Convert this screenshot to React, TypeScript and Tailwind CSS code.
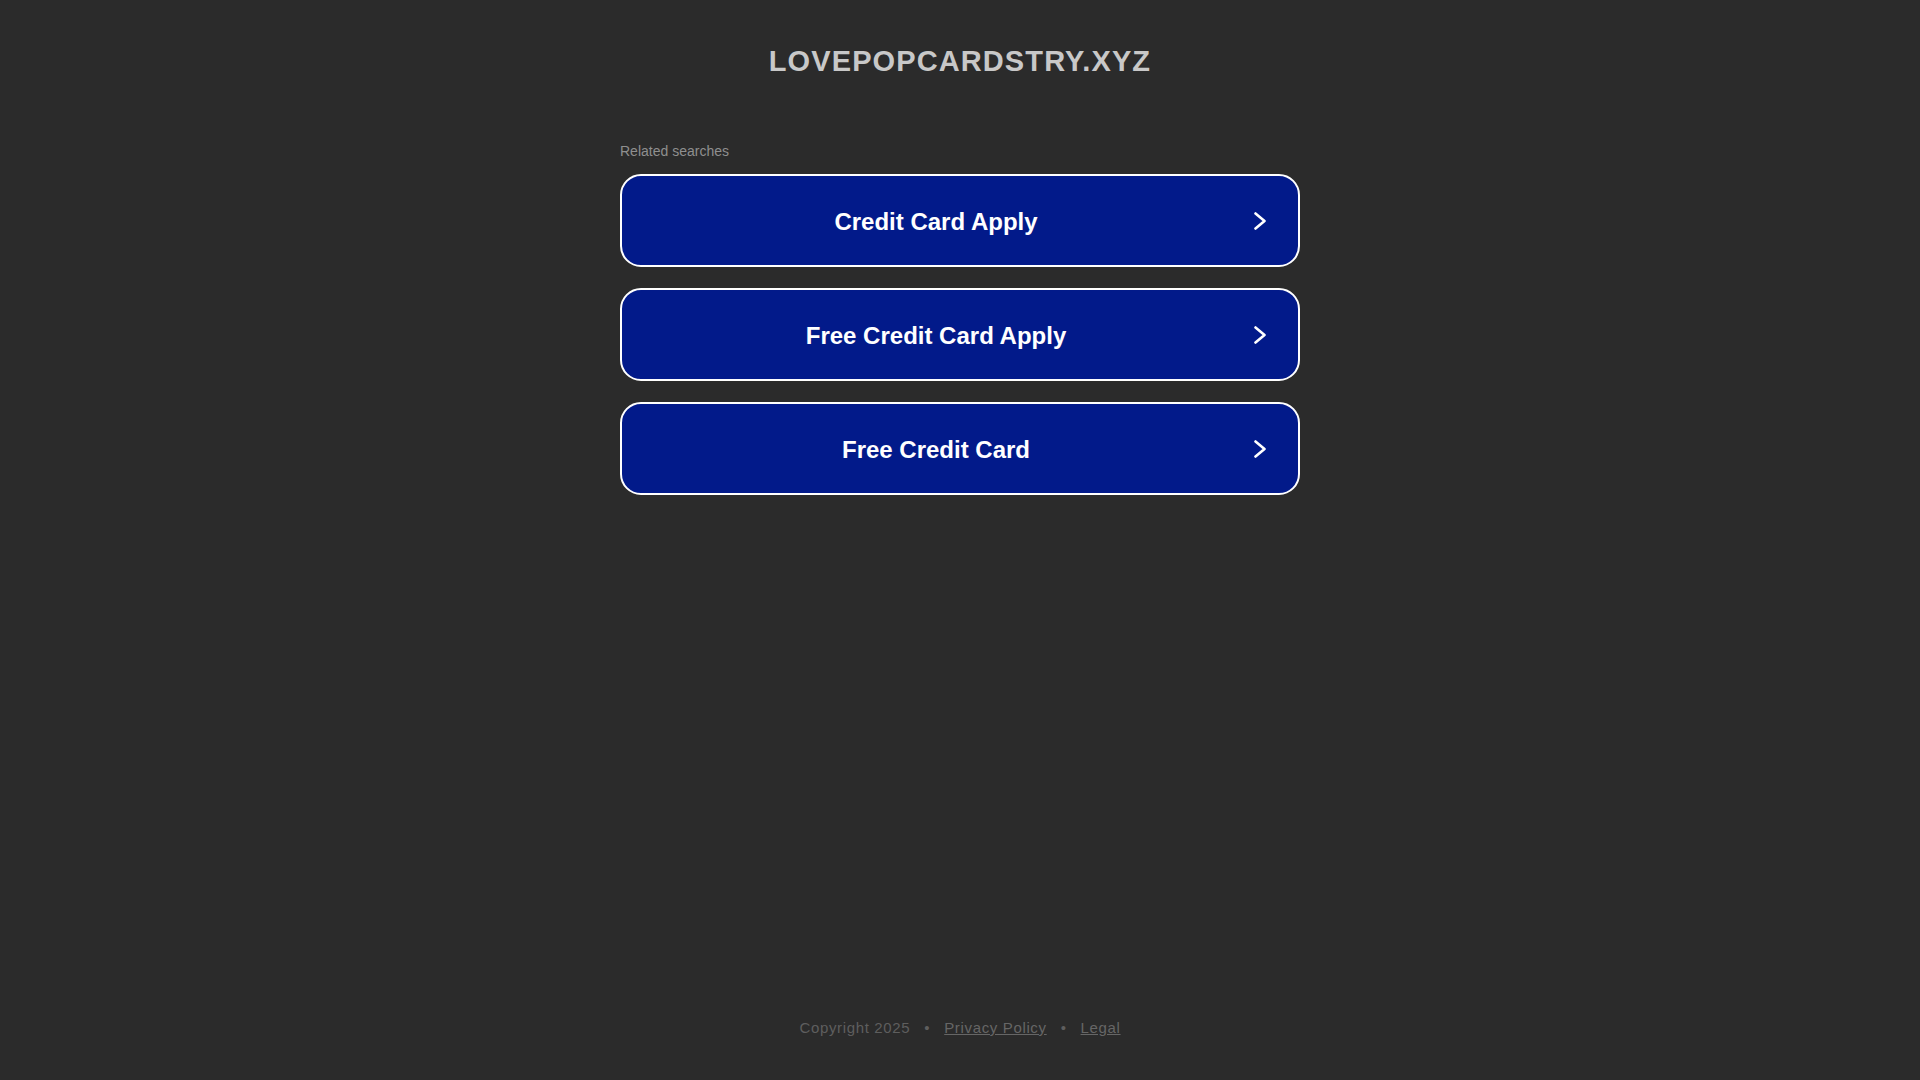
const searches = ['Credit Card Apply', 'Free Credit Card Apply', 'Free Credit Card'];

function Chevron() {
  return (
    <svg viewBox="0 0 12 18" className="ml-[4px] w-[12px] h-[18px]" fill="none" aria-hidden="true">
      <polyline points="1.5,1.5 10.5,9 1.5,16.5" stroke="white" strokeWidth="2.6" strokeLinecap="round" strokeLinejoin="round" />
    </svg>
  );
}

export default function App() {
  return (
    <div className="min-h-screen flex flex-col bg-[#2b2b2b] font-['Liberation_Sans',Arial,sans-serif]">
      <header className="pt-[47px] text-center">
        <h1 className="text-[29px] leading-none font-bold tracking-[1.1px] text-[#c8c8c8]">
          LOVEPOPCARDSTRY.XYZ
        </h1>
      </header>

      <main className="w-[680px] mx-auto mt-[68px]">
        <p className="text-[14px] leading-none text-[#8f8f8f]">Related searches</p>

        <div className="mt-[16px] flex flex-col gap-[21px]">
          {searches.map((label) => (
            <a
              key={label}
              href="#"
              className="h-[93px] flex items-center rounded-[21px] border-2 border-white bg-[#021a8a] pr-[32px] text-white"
            >
              <span className="flex-1 pt-[2px] text-center text-[24px] leading-none font-bold">{label}</span>
              <Chevron />
            </a>
          ))}
        </div>
      </main>

      <footer className="mt-auto pb-[45px] text-center text-[15px] leading-none tracking-[0.65px] text-[#5e5e5e]">
        <span>Copyright 2025</span>
        <span className="mx-[14px]">•</span>
        <a href="#" className="underline text-[#666666]">Privacy Policy</a>
        <span className="mx-[14px]">•</span>
        <a href="#" className="underline text-[#666666]">Legal</a>
      </footer>
    </div>
  );
}
